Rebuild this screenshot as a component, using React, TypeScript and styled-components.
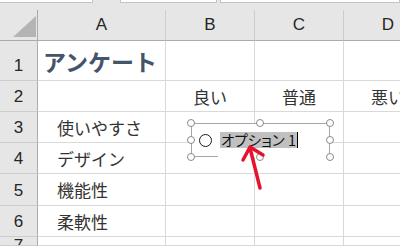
import React from "react";
import styled, { createGlobalStyle } from "styled-components";

const GlobalStyle = createGlobalStyle`
  html, body { margin: 0; padding: 0; background: #ffffff; }
  body { width: 400px; height: 246px; overflow: hidden; }
`;

const JP = `"Noto Sans CJK JP", "Noto Sans", sans-serif`;
const LATIN = `"Liberation Sans", Arial, sans-serif`;

const Window = styled.div`
  position: relative;
  width: 400px;
  height: 246px;
  overflow: hidden;
  background: #e6e6e6;
  display: flex;
  flex-direction: column;
`;

const FormulaStrip = styled.div`
  height: 10px;
  flex: none;
  display: flex;
  align-items: flex-start;
`;

const FormulaBox = styled.div<{ $w?: number; $ml?: number }>`
  ${(p) => (p.$w ? `width: ${p.$w}px; flex: none;` : `flex: 1;`)}
  margin-left: ${(p) => p.$ml ?? 0}px;
  height: 3px;
  box-sizing: border-box;
  background: #ffffff;
  border: 1px solid #c3c3c3;
  border-top: none;
`;

const Sheet = styled.div`
  flex: 1;
  display: grid;
  grid-template-columns: 38px 128px 89px 89px 89px 1fr;
  grid-template-rows: 31px 40px 31px 31px 31px 32px 31px 1fr;
  overflow: hidden;
`;

const Corner = styled.div`
  box-sizing: border-box;
  border-right: 1px solid #ababab;
  border-bottom: 1px solid #ababab;
  display: flex;
  justify-content: flex-end;
  align-items: flex-end;
  padding: 0 1px 3px 0;
`;

const CornerTriangle = styled.div`
  width: 0;
  height: 0;
  border-left: 23px solid transparent;
  border-bottom: 21px solid #b4b4b4;
`;

const ColHeader = styled.div`
  box-sizing: border-box;
  border-right: 1px solid #cdcdcd;
  border-bottom: 1px solid #ababab;
  display: flex;
  align-items: center;
  justify-content: center;
  font-family: ${LATIN};
  font-size: 17px;
  color: #262626;
`;

const RowHeader = styled.div<{ $clip?: boolean }>`
  box-sizing: border-box;
  border-right: 1px solid #ababab;
  border-bottom: 1px solid #cdcdcd;
  display: flex;
  justify-content: center;
  align-items: ${(p) => (p.$clip ? "flex-start" : "flex-end")};
  padding: ${(p) => (p.$clip ? "2px 0 0 0" : "0 0 7px 0")};
  overflow: hidden;
  font-family: ${LATIN};
  font-size: 17px;
  line-height: 14px;
  color: #262626;
`;

const Cell = styled.div<{ $align?: "left" | "center"; $indent?: number; $title?: boolean }>`
  box-sizing: border-box;
  background: #ffffff;
  border-right: 1px solid #d9d9d9;
  border-bottom: 1px solid #d9d9d9;
  display: flex;
  align-items: center;
  justify-content: ${(p) => (p.$align === "center" ? "center" : "flex-start")};
  padding-left: ${(p) => p.$indent ?? 0}px;
  white-space: nowrap;
  overflow: visible;
  font-family: ${JP};
  font-size: ${(p) => (p.$title ? "23px" : "17px")};
  font-weight: ${(p) => (p.$title ? 700 : 400)};
  color: ${(p) => (p.$title ? "#44546a" : "#333333")};
`;

const Control = styled.div`
  position: absolute;
  left: 191px;
  top: 123px;
  width: 139px;
  height: 34px;
  box-sizing: border-box;
  display: flex;
  align-items: center;
  padding-left: 8px;
  gap: 8px;
`;

const Frame = styled.svg`
  position: absolute;
  left: -6px;
  top: -6px;
  overflow: visible;
`;

const Radio = styled.span`
  position: relative;
  width: 13px;
  height: 13px;
  box-sizing: border-box;
  border: 1.4px solid #1a1a1a;
  border-radius: 50%;
  background: #ffffff;
  flex: none;
`;

const OptionText = styled.span`
  position: relative;
  height: 16px;
  line-height: 16px;
  padding: 0 1px 0 1px;
  background: #c0c0c0;
  border-right: 1px solid #000000;
  font-family: ${JP};
  font-feature-settings: "palt";
  font-size: 14.5px;
  color: #111111;
  white-space: pre;
`;

const ArrowLayer = styled.svg`
  position: absolute;
  left: 0;
  top: 0;
  pointer-events: none;
`;

type CellDef = { text?: string; align?: "left" | "center"; indent?: number; title?: boolean };
type RowDef = { n: string; cells: CellDef[]; clip?: boolean };

const blank = (): CellDef[] => [{}, {}, {}, {}, {}];

const rows: RowDef[] = [
  { n: "1", cells: [{ text: "アンケート", title: true, indent: 5 }, {}, {}, {}, {}] },
  {
    n: "2",
    cells: [
      {},
      { text: "良い", align: "center" },
      { text: "普通", align: "center" },
      { text: "悪い", align: "center" },
      {},
    ],
  },
  { n: "3", cells: [{ text: "使いやすさ", indent: 19 }, {}, {}, {}, {}] },
  { n: "4", cells: [{ text: "デザイン", indent: 19 }, {}, {}, {}, {}] },
  { n: "5", cells: [{ text: "機能性", indent: 19 }, {}, {}, {}, {}] },
  { n: "6", cells: [{ text: "柔軟性", indent: 19 }, {}, {}, {}, {}] },
  { n: "7", cells: blank(), clip: true },
];

const handles: [number, number][] = [
  [0, 0],
  [69, 0],
  [139, 0],
  [0, 17],
  [139, 17],
  [0, 34],
  [69, 34],
  [139, 34],
];

export default function App() {
  return (
    <>
      <GlobalStyle />
      <Window>
        <FormulaStrip>
          <FormulaBox $w={94} $ml={-1} />
          <FormulaBox $w={97} $ml={27} />
          <FormulaBox $ml={3} />
        </FormulaStrip>
        <Sheet>
          <Corner>
            <CornerTriangle />
          </Corner>
          {["A", "B", "C", "D", "E"].map((c) => (
            <ColHeader key={c}>{c}</ColHeader>
          ))}
          {rows.map((r) => (
            <React.Fragment key={r.n}>
              <RowHeader $clip={r.clip}>{r.n}</RowHeader>
              {r.cells.map((c, i) => (
                <Cell key={i} $align={c.align} $indent={c.indent} $title={c.title}>
                  {c.text}
                </Cell>
              ))}
            </React.Fragment>
          ))}
        </Sheet>

        <Control>
          <Frame width={151} height={46}>
            <g transform="translate(6,6)">
              <rect x={0} y={0} width={139} height={34} fill="#ffffff" />
              <g stroke="#a6a6a6" strokeWidth={1} fill="none">
                <line x1={0} y1={0.5} x2={139} y2={0.5} />
                <line x1={0.5} y1={0} x2={0.5} y2={34} />
                <line x1={138.5} y1={0} x2={138.5} y2={34} />
                <line x1={0} y1={33.5} x2={27} y2={33.5} />
              </g>
              {handles.map(([x, y], i) => (
                <circle key={i} cx={x} cy={y} r={3.5} fill="#ffffff" stroke="#8a8a8a" strokeWidth={1} />
              ))}
            </g>
          </Frame>
          <Radio />
          <OptionText>{"オプション 1"}</OptionText>
        </Control>

        <ArrowLayer width={400} height={246}>
          <g stroke="#e8112d" strokeWidth={3.5} strokeLinecap="round" strokeLinejoin="round" fill="none">
            <path d="M260 188 L250 148" />
            <path d="M243 160 L250 147 L263 155" />
          </g>
        </ArrowLayer>
      </Window>
    </>
  );
}
